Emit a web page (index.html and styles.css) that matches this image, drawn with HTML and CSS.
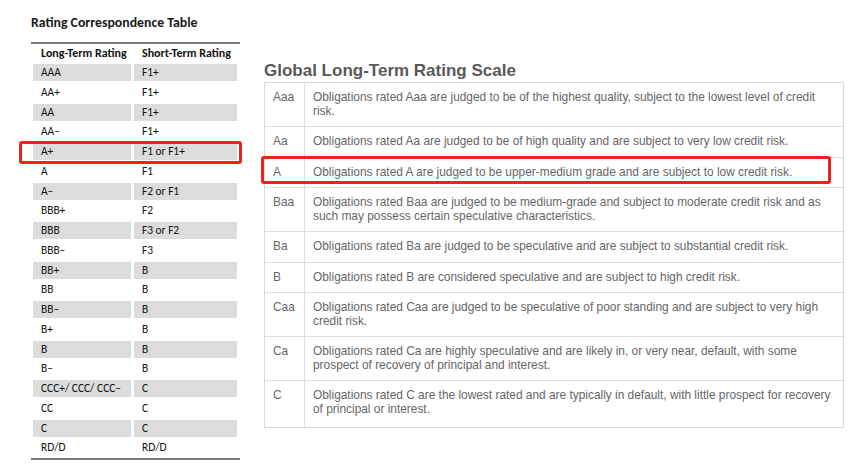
FILE: index.html
```html
<!DOCTYPE html>
<html>
<head>
<meta charset="utf-8">
<link rel="stylesheet" href="styles.css">
</head>
<body>
<div class="page">
  <section class="corr">
    <h2 class="corr-title">Rating Correspondence Table</h2>
    <div class="corr-table">
      <div class="corr-head"><span>Long-Term Rating</span><span>Short-Term Rating</span></div>
      <div class="corr-row shade"><span>AAA</span><span>F1+</span></div>
      <div class="corr-row"><span>AA+</span><span>F1+</span></div>
      <div class="corr-row shade"><span>AA</span><span>F1+</span></div>
      <div class="corr-row"><span>AA–</span><span>F1+</span></div>
      <div class="corr-row shade marked"><span>A+</span><span>F1 or F1+</span><i class="mark mark-left"></i></div>
      <div class="corr-row"><span>A</span><span>F1</span></div>
      <div class="corr-row shade"><span>A–</span><span>F2 or F1</span></div>
      <div class="corr-row"><span>BBB+</span><span>F2</span></div>
      <div class="corr-row shade"><span>BBB</span><span>F3 or F2</span></div>
      <div class="corr-row"><span>BBB–</span><span>F3</span></div>
      <div class="corr-row shade"><span>BB+</span><span>B</span></div>
      <div class="corr-row"><span>BB</span><span>B</span></div>
      <div class="corr-row shade"><span>BB–</span><span>B</span></div>
      <div class="corr-row"><span>B+</span><span>B</span></div>
      <div class="corr-row shade"><span>B</span><span>B</span></div>
      <div class="corr-row"><span>B–</span><span>B</span></div>
      <div class="corr-row shade"><span>CCC+/ CCC/ CCC–</span><span>C</span></div>
      <div class="corr-row"><span>CC</span><span>C</span></div>
      <div class="corr-row shade"><span>C</span><span>C</span></div>
      <div class="corr-row"><span>RD/D</span><span>RD/D</span></div>
    </div>
  </section>
  <section class="scale">
    <h2 class="scale-title">Global Long-Term Rating Scale</h2>
    <div class="scale-table">
      <div class="scale-row"><div class="lbl">Aaa</div><div class="desc">Obligations rated Aaa are judged to be of the highest quality, subject to the lowest level of credit risk.</div></div>
      <div class="scale-row"><div class="lbl">Aa</div><div class="desc">Obligations rated Aa are judged to be of high quality and are subject to very low credit risk.</div></div>
      <div class="scale-row marked"><div class="lbl">A</div><div class="desc">Obligations rated A are judged to be upper-medium grade and are subject to low credit risk.</div><i class="mark mark-right"></i></div>
      <div class="scale-row"><div class="lbl">Baa</div><div class="desc">Obligations rated Baa are judged to be medium-grade and subject to moderate credit risk and as such may possess certain speculative characteristics.</div></div>
      <div class="scale-row"><div class="lbl">Ba</div><div class="desc">Obligations rated Ba are judged to be speculative and are subject to substantial credit risk.</div></div>
      <div class="scale-row"><div class="lbl">B</div><div class="desc">Obligations rated B are considered speculative and are subject to high credit risk.</div></div>
      <div class="scale-row"><div class="lbl">Caa</div><div class="desc">Obligations rated Caa are judged to be speculative of poor standing and are subject to very high credit risk.</div></div>
      <div class="scale-row"><div class="lbl">Ca</div><div class="desc">Obligations rated Ca are highly speculative and are likely in, or very near, default, with some prospect of recovery of principal and interest.</div></div>
      <div class="scale-row"><div class="lbl">C</div><div class="desc">Obligations rated C are the lowest rated and are typically in default, with little prospect for recovery of principal or interest.</div></div>
    </div>
  </section>
</div>
</body>
</html>
```

FILE: styles.css
```css
html, body {
  margin: 0;
  padding: 0;
  background: #fff;
}

.page {
  display: flex;
  align-items: flex-start;
  width: 868px;
  height: 470px;
  box-sizing: border-box;
  padding-left: 31px;
}

/* ---------- Left: correspondence table ---------- */
.corr {
  width: 209px;
  padding-top: 15px;
  font-family: Carlito, "Liberation Sans Narrow", "Open Sans", sans-serif;
  color: #111;
}

.corr-title {
  margin: 0;
  font-size: 13.8px;
  line-height: 16px;
  font-weight: bold;
  color: #1a1a1a;
}

.corr-table {
  margin-top: 11px;
  border-top: 2px solid #7a7a7a;
  border-bottom: 2px solid #7a7a7a;
}

.corr-head {
  display: grid;
  grid-template-columns: 98px 103px;
  column-gap: 3px;
  padding-left: 2px;
  height: 18px;
  align-items: center;
  font-size: 12px;
  font-weight: bold;
  padding-bottom: 1px;
}

.corr-head span,
.corr-row span {
  padding-left: 8px;
}

.corr-row {
  position: relative;
  display: grid;
  grid-template-columns: 98px 103px;
  column-gap: 3px;
  padding-left: 2px;
  height: 19.75px;
  box-sizing: border-box;
  padding-top: 1px;
  font-size: 11.4px;
}

.corr-row span {
  height: 17px;
  line-height: 17px;
  white-space: nowrap;
}

.corr-row.shade span {
  background: #dcdcdc;
}

/* ---------- Right: rating scale ---------- */
.scale {
  margin-left: 24px;
  width: 580px;
  padding-top: 60px;
  font-family: "Liberation Sans", Arial, sans-serif;
}

.scale-title {
  margin: 0 0 1px;
  font-size: 17px;
  line-height: 21px;
  font-weight: bold;
  color: #595959;
}

.scale-table {
  border: 1px solid #d9d9d9;
}

.scale-row {
  position: relative;
  display: grid;
  grid-template-columns: 40px 1fr;
  border-top: 1px solid #dedede;
  font-size: 11.9px;
  line-height: 13.5px;
  color: #666;
}

.scale-row:first-child {
  border-top: none;
}

.scale-row .lbl {
  padding: 8px;
  border-right: 1px solid #dedede;
}

.scale-row .desc {
  padding: 8px 6px 8px 8px;
}

.scale-row:last-child .desc {
  padding-bottom: 11px;
}

/* ---------- Highlight marks ---------- */
.mark {
  position: absolute;
  border: 3px solid #f0201a;
  border-radius: 3px;
  pointer-events: none;
}

.mark-left {
  left: -12px;
  right: -2px;
  top: -1px;
  bottom: -2px;
}

.mark-right {
  left: -4px;
  right: 12px;
  top: -2px;
  bottom: 3px;
}
```
